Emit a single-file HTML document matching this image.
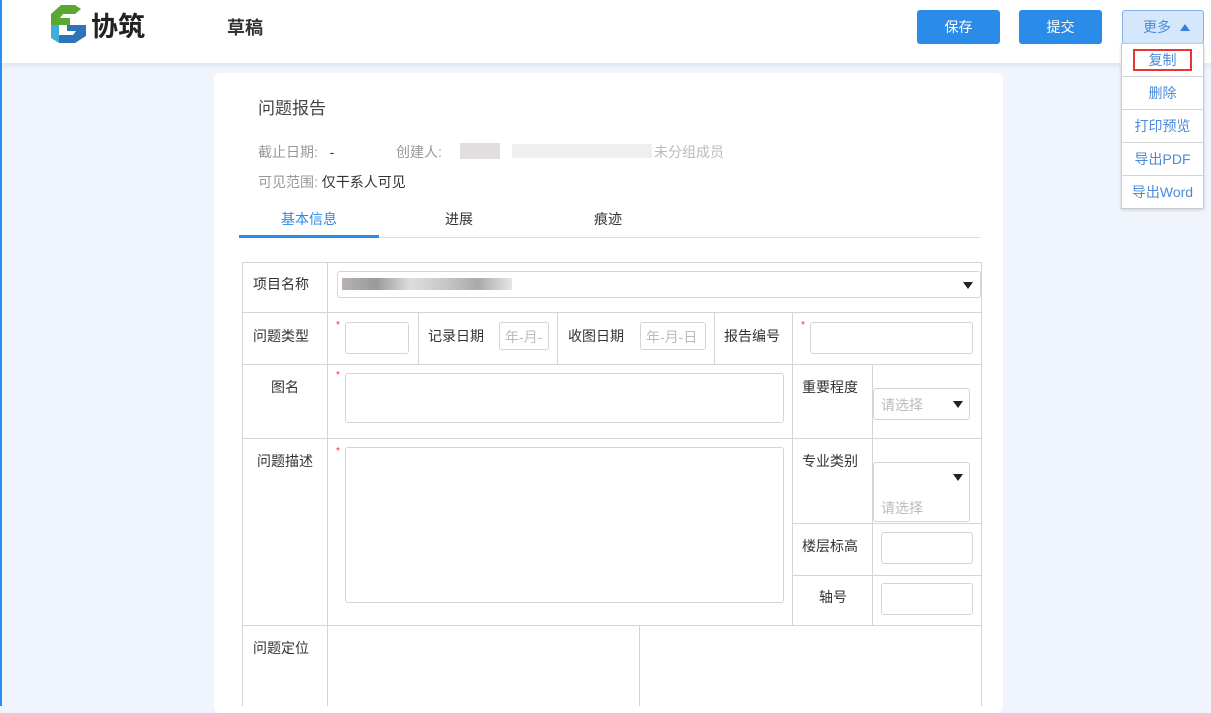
<!DOCTYPE html>
<html><head><meta charset="utf-8"><style>
*{margin:0;padding:0;box-sizing:border-box}
body{width:1211px;height:706px;overflow:hidden;background:#f0f5fd;font-family:"Liberation Sans","Noto Sans CJK SC",sans-serif;font-size:14px;color:#333;position:relative}
.a{position:absolute}
.hdr{left:0;top:0;width:1211px;height:63px;background:#fff;box-shadow:0 2px 6px rgba(150,170,210,.25)}
.lb{left:0;top:0;width:2px;height:706px;background:#2d8cf0;z-index:5}
.btn{top:10px;height:34px;width:83px;background:#2a8be8;color:#fff;border-radius:3px;text-align:center;line-height:34px;font-size:14px}
.card{left:214px;top:73px;width:789px;height:640px;background:#fff;border-radius:6px}
.l{background:#d5d5d5}
.in{border:1px solid #d5d5d5;border-radius:3px;background:#fff}
.lab{font-size:14px;color:#333}
.star{color:#e33;font-size:10px}
.menu{left:1121px;top:43px;width:83px;height:166px;background:#fff;border:1px solid #ccc;box-shadow:0 1px 3px rgba(0,0,0,.15)}
.mi{position:absolute;left:0;width:81px;text-align:center;color:#4a8ad8;font-size:14px;border-bottom:1px solid #d5d5d5;height:33px;line-height:32px}
.ph{color:#bbb;font-size:14px}
.tri{width:0;height:0;border-left:5px solid transparent;border-right:5px solid transparent;border-top:7px solid #222}
</style></head><body>
<div class="a lb"></div>
<div class="a hdr"></div>
<svg class="a" style="left:51px;top:5px" width="35" height="38" viewBox="0 0 35 38">
<polygon points="10,0 24,0 30,4 24,9 12,9 9,13 19,13 19,20 0,20 0,9" fill="#5aa832"/>
<polygon points="16,20 35,20 35,31 24,38 8,38 8,30 22,30 25,26 16,26" fill="#2d74b8"/>
<polygon points="0,20 8,20 8,38 0,33" fill="#3cb0d8"/>
</svg>
<div class="a" style="left:91px;top:5px;font-size:27px;font-weight:bold;color:#222">协筑</div>
<div class="a" style="left:227px;top:14px;font-size:18px;font-weight:bold;color:#333">草稿</div>
<div class="a btn" style="left:917px">保存</div>
<div class="a btn" style="left:1019px">提交</div>
<div class="a" style="left:1122px;top:10px;width:82px;height:34px;background:#d5e8fb;border:1px solid #7fb3ea;border-radius:3px;color:#4a8ad8;line-height:32px;padding-left:20px">更多 <span style="display:inline-block;width:0;height:0;border-left:5px solid transparent;border-right:5px solid transparent;border-bottom:7px solid #3a7fd5;margin-left:5px;vertical-align:1px"></span></div>
<div class="a menu">
<div class="mi" style="top:0"><span style="display:inline-block;border:2px solid #e33;width:59px;height:22px;line-height:18px;margin-top:5px">复制</span></div>
<div class="mi" style="top:33px">删除</div>
<div class="mi" style="top:66px">打印预览</div>
<div class="mi" style="top:99px">导出PDF</div>
<div class="mi" style="top:132px;border:none">导出Word</div>
</div>
<div class="a card"></div>
<div class="a" style="left:258px;top:94px;font-size:17px;color:#444">问题报告</div>
<div class="a" style="left:258px;top:142px;color:#999">截止日期: &nbsp; <span style="color:#333">-</span></div>
<div class="a" style="left:396px;top:142px;color:#999">创建人:</div>
<div class="a" style="left:460px;top:143px;width:40px;height:16px;background:#d8d6d6;opacity:.8"></div>
<div class="a" style="left:512px;top:144px;width:140px;height:14px;background:#efefef"></div>
<div class="a" style="left:654px;top:142px;color:#bbb">未分组成员</div>
<div class="a" style="left:258px;top:172px;color:#999">可见范围: <span style="color:#333">仅干系人可见</span></div>
<div class="a" style="left:281px;top:209px;color:#2a8be8">基本信息</div>
<div class="a" style="left:445px;top:209px">进展</div>
<div class="a" style="left:594px;top:209px">痕迹</div>
<div class="a l" style="left:239px;top:237px;width:741px;height:1px;background:#ddd"></div>
<div class="a" style="left:239px;top:235px;width:140px;height:3px;background:#2a8be8"></div>
<div class="a l" style="left:242px;top:262px;width:740px;height:1px"></div>
<div class="a l" style="left:242px;top:312px;width:740px;height:1px"></div>
<div class="a l" style="left:242px;top:364px;width:740px;height:1px"></div>
<div class="a l" style="left:242px;top:438px;width:740px;height:1px"></div>
<div class="a l" style="left:792px;top:523px;width:190px;height:1px"></div>
<div class="a l" style="left:792px;top:575px;width:190px;height:1px"></div>
<div class="a l" style="left:242px;top:625px;width:740px;height:1px"></div>
<div class="a l" style="left:242px;top:262px;width:1px;height:444px"></div>
<div class="a l" style="left:327px;top:262px;width:1px;height:444px"></div>
<div class="a l" style="left:981px;top:262px;width:1px;height:444px"></div>
<div class="a l" style="left:418px;top:312px;width:1px;height:52px"></div>
<div class="a l" style="left:557px;top:312px;width:1px;height:52px"></div>
<div class="a l" style="left:714px;top:312px;width:1px;height:52px"></div>
<div class="a l" style="left:792px;top:312px;width:1px;height:313px"></div>
<div class="a l" style="left:872px;top:364px;width:1px;height:261px"></div>
<div class="a l" style="left:639px;top:625px;width:1px;height:81px"></div>
<div class="a lab" style="left:253px;top:274px">项目名称</div>
<div class="a in" style="left:337px;top:271px;width:644px;height:27px"></div>
<div class="a" style="left:342px;top:278px;width:170px;height:12px;background:linear-gradient(90deg,#b8b2b2,#9a9a9a 20%,#ddd 40%,#c8c8c8 60%,#a8aaa8 80%,#e6e6e6)"></div>
<div class="a tri" style="left:963px;top:282px"></div>
<div class="a lab" style="left:253px;top:326px">问题类型</div>
<div class="a star" style="left:336px;top:320px">*</div>
<div class="a in" style="left:345px;top:322px;width:64px;height:32px"></div>
<div class="a lab" style="left:428px;top:326px">记录日期</div>
<div class="a in ph" style="left:499px;top:322px;width:50px;height:28px;padding:4px 5px;overflow:hidden;white-space:nowrap">年-月-</div>
<div class="a lab" style="left:568px;top:326px">收图日期</div>
<div class="a in ph" style="left:640px;top:322px;width:66px;height:28px;padding:4px 5px;overflow:hidden;white-space:nowrap">年-月-日</div>
<div class="a lab" style="left:724px;top:326px">报告编号</div>
<div class="a star" style="left:801px;top:320px">*</div>
<div class="a in" style="left:810px;top:322px;width:163px;height:32px"></div>
<div class="a lab" style="left:271px;top:377px">图名</div>
<div class="a star" style="left:336px;top:370px">*</div>
<div class="a in" style="left:345px;top:373px;width:439px;height:50px"></div>
<div class="a lab" style="left:802px;top:377px">重要程度</div>
<div class="a in ph" style="left:873px;top:388px;width:97px;height:32px;padding:6px 7px">请选择</div>
<div class="a tri" style="left:953px;top:401px"></div>
<div class="a lab" style="left:257px;top:451px">问题描述</div>
<div class="a star" style="left:336px;top:446px">*</div>
<div class="a in" style="left:345px;top:447px;width:439px;height:156px"></div>
<div class="a lab" style="left:802px;top:451px">专业类别</div>
<div class="a in ph" style="left:873px;top:462px;width:97px;height:60px;padding:35px 7px 0">请选择</div>
<div class="a tri" style="left:953px;top:474px"></div>
<div class="a lab" style="left:802px;top:536px">楼层标高</div>
<div class="a in" style="left:881px;top:532px;width:92px;height:32px"></div>
<div class="a lab" style="left:819px;top:587px">轴号</div>
<div class="a in" style="left:881px;top:583px;width:92px;height:32px"></div>
<div class="a lab" style="left:253px;top:638px">问题定位</div>
</body></html>
